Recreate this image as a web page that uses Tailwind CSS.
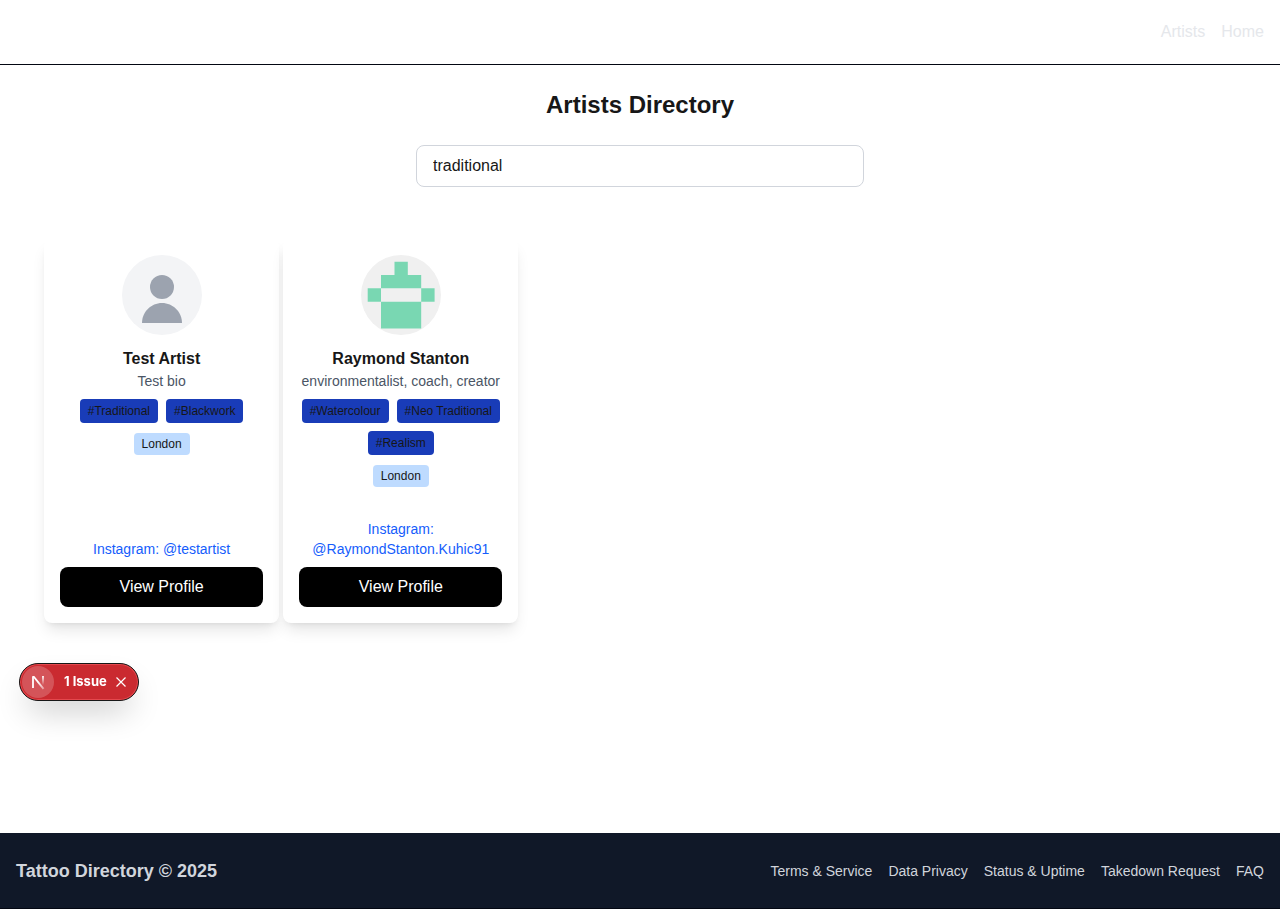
<!DOCTYPE html>
<html lang="en">
<head>
<meta charset="utf-8">
<meta name="viewport" content="width=device-width, initial-scale=1">
<title>Artists Directory</title>
<script src="https://cdn.jsdelivr.net/npm/@tailwindcss/browser@4"></script>
</head>
<body class="flex min-h-screen flex-col bg-white font-['Liberation_Sans',Arial,sans-serif] text-[#171717]">
  <header class="flex h-[65px] items-center justify-end border-b border-gray-950 px-4">
    <nav class="flex gap-4 text-base font-medium text-gray-200">
      <a href="#artists">Artists</a>
      <a href="#home">Home</a>
    </nav>
  </header>

  <main class="flex grow flex-col pt-6">
    <h1 class="text-center text-2xl font-bold">Artists Directory</h1>
    <div class="mx-auto mt-6 w-full max-w-md">
      <input type="text" aria-label="Search artists" value="traditional" class="block w-full rounded-lg border border-gray-300 px-4 py-2 text-base">
    </div>

    <section id="artists" class="mt-13 grid grid-cols-5 gap-1 px-11">
      <article class="flex min-h-96 flex-col items-center rounded-lg bg-white p-4 text-center shadow-lg">
        <svg class="size-20 rounded-full" viewBox="0 0 80 80" aria-hidden="true">
          <rect width="80" height="80" fill="#f3f4f6"/>
          <circle cx="40" cy="32" r="12" fill="#9ca3af"/>
          <path d="M20 68C20 57 29 48 40 48s20 9 20 20z" fill="#9ca3af"/>
        </svg>
        <h2 class="mt-3 text-base font-bold">Test Artist</h2>
        <p class="text-sm text-gray-600">Test bio</p>
        <div class="mt-2 flex flex-wrap justify-center gap-2 text-xs">
          <span class="rounded-sm bg-blue-800 px-2 py-1">#Traditional</span>
          <span class="rounded-sm bg-blue-800 px-2 py-1">#Blackwork</span>
        </div>
        <span class="mt-2.5 rounded-sm bg-blue-200 px-2 py-1 text-xs leading-[14px]">London</span>
        <a href="#instagram-testartist" class="mt-auto text-sm text-blue-600">Instagram: @testartist</a>
        <button type="button" class="mt-2 w-full rounded-lg bg-black py-2 text-base text-white">View Profile</button>
      </article>

      <article class="flex min-h-96 flex-col items-center rounded-lg bg-white p-4 text-center shadow-lg">
        <svg class="size-20 rounded-full" viewBox="0 0 80 80" aria-hidden="true">
          <rect width="80" height="80" fill="#f0f0f0"/>
          <path d="M33.500 6.700h13.300V20h13.400v13.300h13.400v13.400H60.200v26.800H20V46.700H6.700V33.300H20V20h13.500zM20 33.300v13.400h40.200V33.300z" fill="#79d7b2" fill-rule="evenodd"/>
        </svg>
        <h2 class="mt-3 text-base font-bold">Raymond Stanton</h2>
        <p class="text-sm text-gray-600">environmentalist, coach, creator</p>
        <div class="mt-2 flex flex-wrap justify-center gap-2 text-xs">
          <span class="rounded-sm bg-blue-800 px-2 py-1">#Watercolour</span>
          <span class="rounded-sm bg-blue-800 px-2 py-1">#Neo Traditional</span>
          <span class="rounded-sm bg-blue-800 px-2 py-1">#Realism</span>
        </div>
        <span class="mt-2.5 rounded-sm bg-blue-200 px-2 py-1 text-xs leading-[14px]">London</span>
        <a href="#instagram-raymond" class="mt-auto text-sm text-blue-600">Instagram: @RaymondStanton.Kuhic91</a>
        <button type="button" class="mt-2 w-full rounded-lg bg-black py-2 text-base text-white">View Profile</button>
      </article>
    </section>
  </main>

  <footer class="flex items-center justify-between border-b border-gray-950 bg-gray-900 px-4 pt-6 pb-[23px] text-gray-300">
    <p class="text-lg font-bold">Tattoo Directory © 2025</p>
    <nav class="flex gap-4 text-sm">
      <a href="#terms">Terms &amp; Service</a>
      <a href="#privacy">Data Privacy</a>
      <a href="#status">Status &amp; Uptime</a>
      <a href="#takedown">Takedown Request</a>
      <a href="#faq">FAQ</a>
    </nav>
  </footer>

  <!-- Floating dev-tools indicator -->
  <div class="fixed bottom-[208px] left-[19px] flex h-[38px] w-[120px] items-center rounded-full border border-[#171717] bg-[#ca2a30] pl-0.5 font-[Inter,sans-serif] text-[13px] text-white shadow-[inset_0_0_0_1px_#e5484d,0_16px_32px_-8px_rgba(0,0,0,0.24)]">
    <button type="button" aria-label="Open dev tools" class="flex size-8 items-center justify-center rounded-full bg-white/20">
      <svg class="size-8" viewBox="0 0 32 32" fill="none" aria-hidden="true">
        <defs>
          <linearGradient id="fade-stem" x1="0" y1="10" x2="0" y2="19" gradientUnits="userSpaceOnUse"><stop stop-color="#fff"/><stop offset="1" stop-color="#fff" stop-opacity="0"/></linearGradient>
          <linearGradient id="fade-leg" x1="16" y1="16" x2="22" y2="23" gradientUnits="userSpaceOnUse"><stop stop-color="#fff"/><stop offset="1" stop-color="#fff" stop-opacity="0.400"/></linearGradient>
        </defs>
        <path d="M11 22V10.500" stroke="#fff" stroke-width="1.800"/>
        <path d="M10.100 10h2.200l10 12.300-1.500 1.100z" fill="url(#fade-leg)"/>
        <path d="M21 10v9" stroke="url(#fade-stem)" stroke-width="1.800"/>
      </svg>
    </button>
    <button type="button" class="ml-2.5 font-bold">1 Issue</button>
    <button type="button" aria-label="Hide issues" class="ml-2">
      <svg class="size-3" viewBox="0 0 12 12" fill="none" stroke="#fff" stroke-width="1.200" aria-hidden="true"><path d="M1.500 1.500l9 9M10.500 1.500l-9 9"/></svg>
    </button>
  </div>
</body>
</html>
